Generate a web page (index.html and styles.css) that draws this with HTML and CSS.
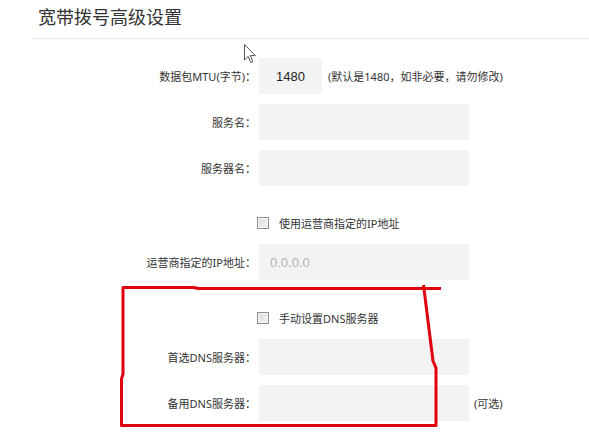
FILE: index.html
```html
<!DOCTYPE html>
<html lang="zh-CN">
<head>
<meta charset="utf-8">
<title>宽带拨号高级设置</title>
<link rel="stylesheet" href="styles.css">
</head>
<body>
<div class="page">
  <header class="head">
    <h1 class="title">宽带拨号高级设置</h1>
  </header>
  <div class="form">
    <div class="row">
      <span class="lbl">数据包MTU(字节)：</span>
      <span class="field mtu">1480</span>
      <span class="hint">(默认是1480，如非必要，请勿修改)</span>
    </div>
    <div class="row">
      <span class="lbl">服务名：</span>
      <span class="field"></span>
    </div>
    <div class="row">
      <span class="lbl">服务器名：</span>
      <span class="field"></span>
    </div>
    <div class="row check first-check">
      <span class="cb"></span>
      <span class="cb-text">使用运营商指定的IP地址</span>
    </div>
    <div class="row">
      <span class="lbl">运营商指定的IP地址：</span>
      <span class="field placeholder">0.0.0.0</span>
    </div>
    <div class="row check second-check">
      <span class="cb"></span>
      <span class="cb-text">手动设置DNS服务器</span>
    </div>
    <div class="row">
      <span class="lbl">首选DNS服务器：</span>
      <span class="field"></span>
    </div>
    <div class="row">
      <span class="lbl">备用DNS服务器：</span>
      <span class="field"></span>
      <span class="hint opt">(可选)</span>
    </div>
  </div>

  <svg class="annot" width="589" height="443" viewBox="0 0 589 443">
    <path d="M441,288.5 L198,288.5 L194,287.5 L123,287.5 L123,374 L121.5,379 L121.5,425.5 L436,425.5 L436,368 L433,361 L423.5,285" fill="none" stroke="#e0000e" stroke-width="3" stroke-linejoin="round"/>
  </svg>

  <svg class="cursor" width="13" height="20" viewBox="0 0 13 20">
    <path d="M0.5,0.5 L0.5,16 L4.2,12.4 L6.8,18.6 L8.8,17.7 L6.3,11.6 L11.3,11.6 Z" fill="#fff" stroke="#555" stroke-width="1" stroke-linejoin="round"/>
  </svg>
</div>
</body>
</html>
```

FILE: styles.css
```css
html, body {
  margin: 0;
  padding: 0;
  background: #ffffff;
}

.page {
  position: relative;
  width: 589px;
  height: 443px;
  overflow: hidden;
  font-family: "Noto Sans", "Noto Sans CJK SC", sans-serif;
  color: #333333;
}

.head {
  margin-left: 32px;
  height: 38px;
  border-bottom: 1px solid #ececec;
  display: flex;
  align-items: center;
}

.title {
  margin: 0 0 6px 6px;
  font-family: "Noto Sans CJK SC", sans-serif;
  font-size: 18px;
  font-weight: normal;
  color: #333333;
}

.form {
  display: flex;
  flex-direction: column;
  gap: 10px;
  padding-top: 19px;
}

.row {
  display: flex;
  align-items: center;
  height: 36px;
  font-size: 11px;
}

.lbl {
  width: 256px;
  text-align: right;
  margin-right: 3px;
  color: #333333;
}

.field {
  box-sizing: border-box;
  width: 210px;
  height: 36px;
  background: #f3f3f3;
  display: flex;
  align-items: center;
  padding-left: 11px;
  font-family: "Liberation Sans", sans-serif;
  font-size: 13px;
  color: #222222;
}

.field.mtu {
  width: 63px;
  padding-left: 0;
  justify-content: center;
}

.field.placeholder {
  color: #b4b4b4;
}

.hint {
  margin-left: 6px;
  color: #333333;
}

.hint.opt {
  margin-left: 5px;
}

.check {
  height: 20px;
  padding-left: 257px;
}

.first-check {
  margin-top: 17px;
  margin-bottom: 1px;
}

.second-check {
  margin-top: 18px;
  margin-bottom: 1px;
}

.cb {
  box-sizing: border-box;
  width: 12px;
  height: 12px;
  border: 1px solid #8e8e8e;
  background: linear-gradient(135deg, #dcdcdc 0%, #f4f4f4 100%);
  box-shadow: inset 0 0 0 1px #f7f7f7;
}

.cb-text {
  margin-left: 10px;
  color: #333333;
}

.annot {
  position: absolute;
  left: 0;
  top: 0;
  pointer-events: none;
}

.cursor {
  position: absolute;
  left: 243.5px;
  top: 43.5px;
  pointer-events: none;
}
```
